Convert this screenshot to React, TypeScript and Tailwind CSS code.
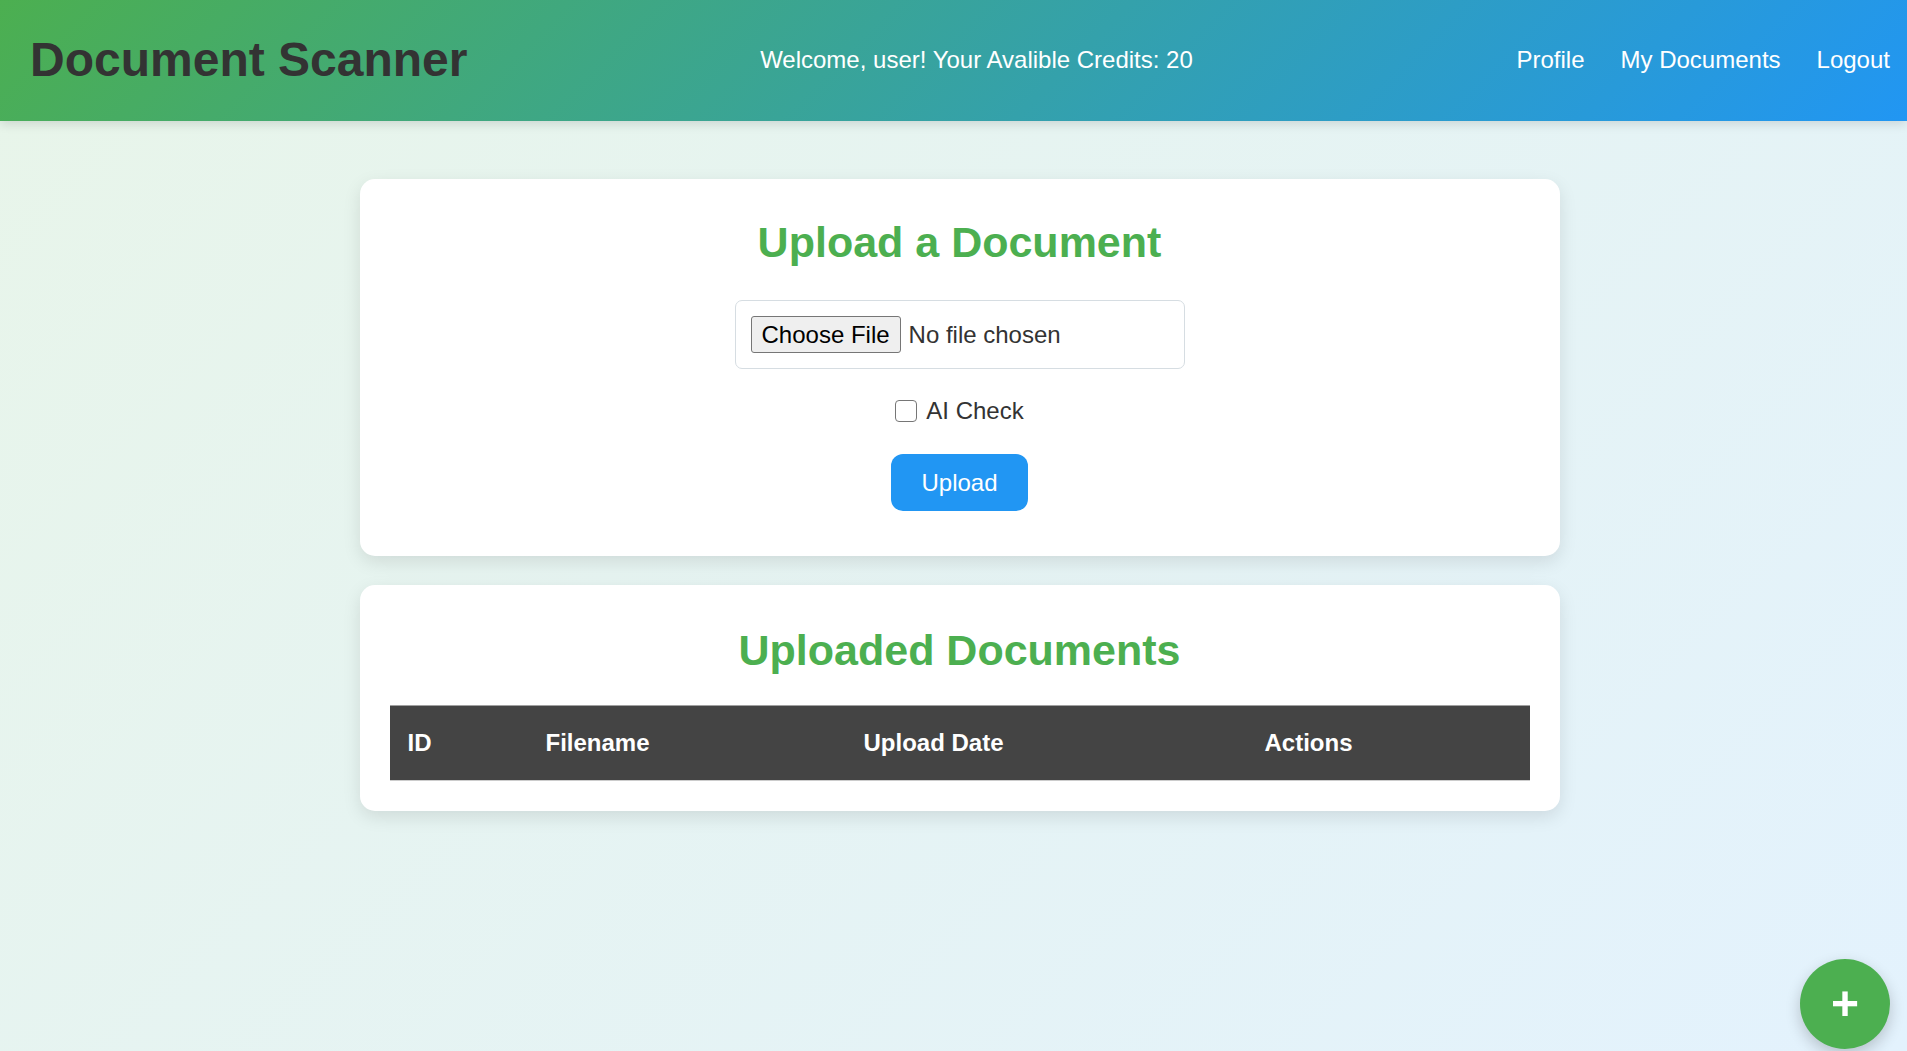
const navLinks = ['Profile', 'My Documents', 'Logout'];

const columns = [
  { label: 'ID', width: 'w-[138px]' },
  { label: 'Filename', width: 'w-[318px]' },
  { label: 'Upload Date', width: 'w-[401px]' },
  { label: 'Actions', width: 'w-[283px]' },
];

export default function App() {
  return (
    <div className="min-h-screen bg-[linear-gradient(135deg,#e8f5e9,#e3f2fd)] font-['Liberation_Sans',Arial,sans-serif] text-[#333]">
      <header className="flex h-[121px] items-center justify-between bg-[linear-gradient(135deg,#4caf50,#2196f3)] pb-[2px] pl-[30px] pr-[17px] shadow-[0_3px_10px_rgba(0,0,0,0.12)]">
        <h1 className="pb-[1px] text-[48px] font-bold leading-[55px] text-[#333]">Document Scanner</h1>
        <p className="text-[24px] leading-[28px] text-white">Welcome, user! Your Avalible Credits: 20</p>
        <nav className="flex gap-[36px] pl-[31px] text-[24px] leading-[28px] text-white">
          {navLinks.map((link) => (
            <a key={link} href="#">
              {link}
            </a>
          ))}
        </nav>
      </header>

      <main className="flex flex-col items-center gap-[29px] pl-[12px] pt-[58px]">
        <section className="w-[1200px] rounded-[15px] bg-white px-[30px] pb-[45px] pt-[38px] text-center shadow-[0_6px_18px_rgba(0,0,0,0.1)]">
          <h2 className="text-[43px] font-bold leading-[50px] text-[#4caf50]">Upload a Document</h2>
          <div className="mt-[33px] flex justify-center">
            <div className="flex w-[450px] items-center rounded-[7px] border border-[#d6dde2] p-[15px]">
              <button className="h-[37px] rounded-[3px] border border-[#767676] bg-[#efefef] px-[10px] text-[24px] leading-[28px] text-black">
                Choose File
              </button>
              <span className="ml-[8px] text-[24px] leading-[28px] text-[#333]">No file chosen</span>
            </div>
          </div>
          <label className="mt-[28px] flex h-[28px] items-center justify-center gap-[9px] text-[24px] leading-[28px]">
            <input
              type="checkbox"
              className="h-[22px] w-[22px] appearance-none rounded-[4px] border-[1.5px] border-[#767676] bg-white"
            />
            AI Check
          </label>
          <button className="mt-[29px] rounded-[12px] bg-[#2196f3] px-[30px] py-[15px] text-[24px] leading-[27px] text-white">
            Upload
          </button>
        </section>

        <section className="w-[1200px] rounded-[15px] bg-white px-[30px] pb-[30px] pt-[40px] text-center shadow-[0_6px_18px_rgba(0,0,0,0.1)]">
          <h2 className="text-[43px] font-bold leading-[50px] text-[#4caf50]">Uploaded Documents</h2>
          <table className="mt-[30px] w-full table-fixed border-collapse">
            <thead>
              <tr className="bg-[#444]">
                {columns.map((col) => (
                  <th
                    key={col.label}
                    className={`${col.width} border-b border-t border-b-[#cccccc] border-t-[#a0a0a0] px-[18px] py-[23px] text-left text-[24px] font-bold leading-[28px] text-white`}
                  >
                    {col.label}
                  </th>
                ))}
              </tr>
            </thead>
            <tbody></tbody>
          </table>
        </section>
      </main>

      <button className="fixed bottom-[2px] right-[17px] flex h-[90px] w-[90px] items-center justify-center rounded-full bg-[#4caf50] text-[48px] font-bold leading-none text-white shadow-[0_6px_15px_rgba(0,0,0,0.2)]">
        +
      </button>
    </div>
  );
}
